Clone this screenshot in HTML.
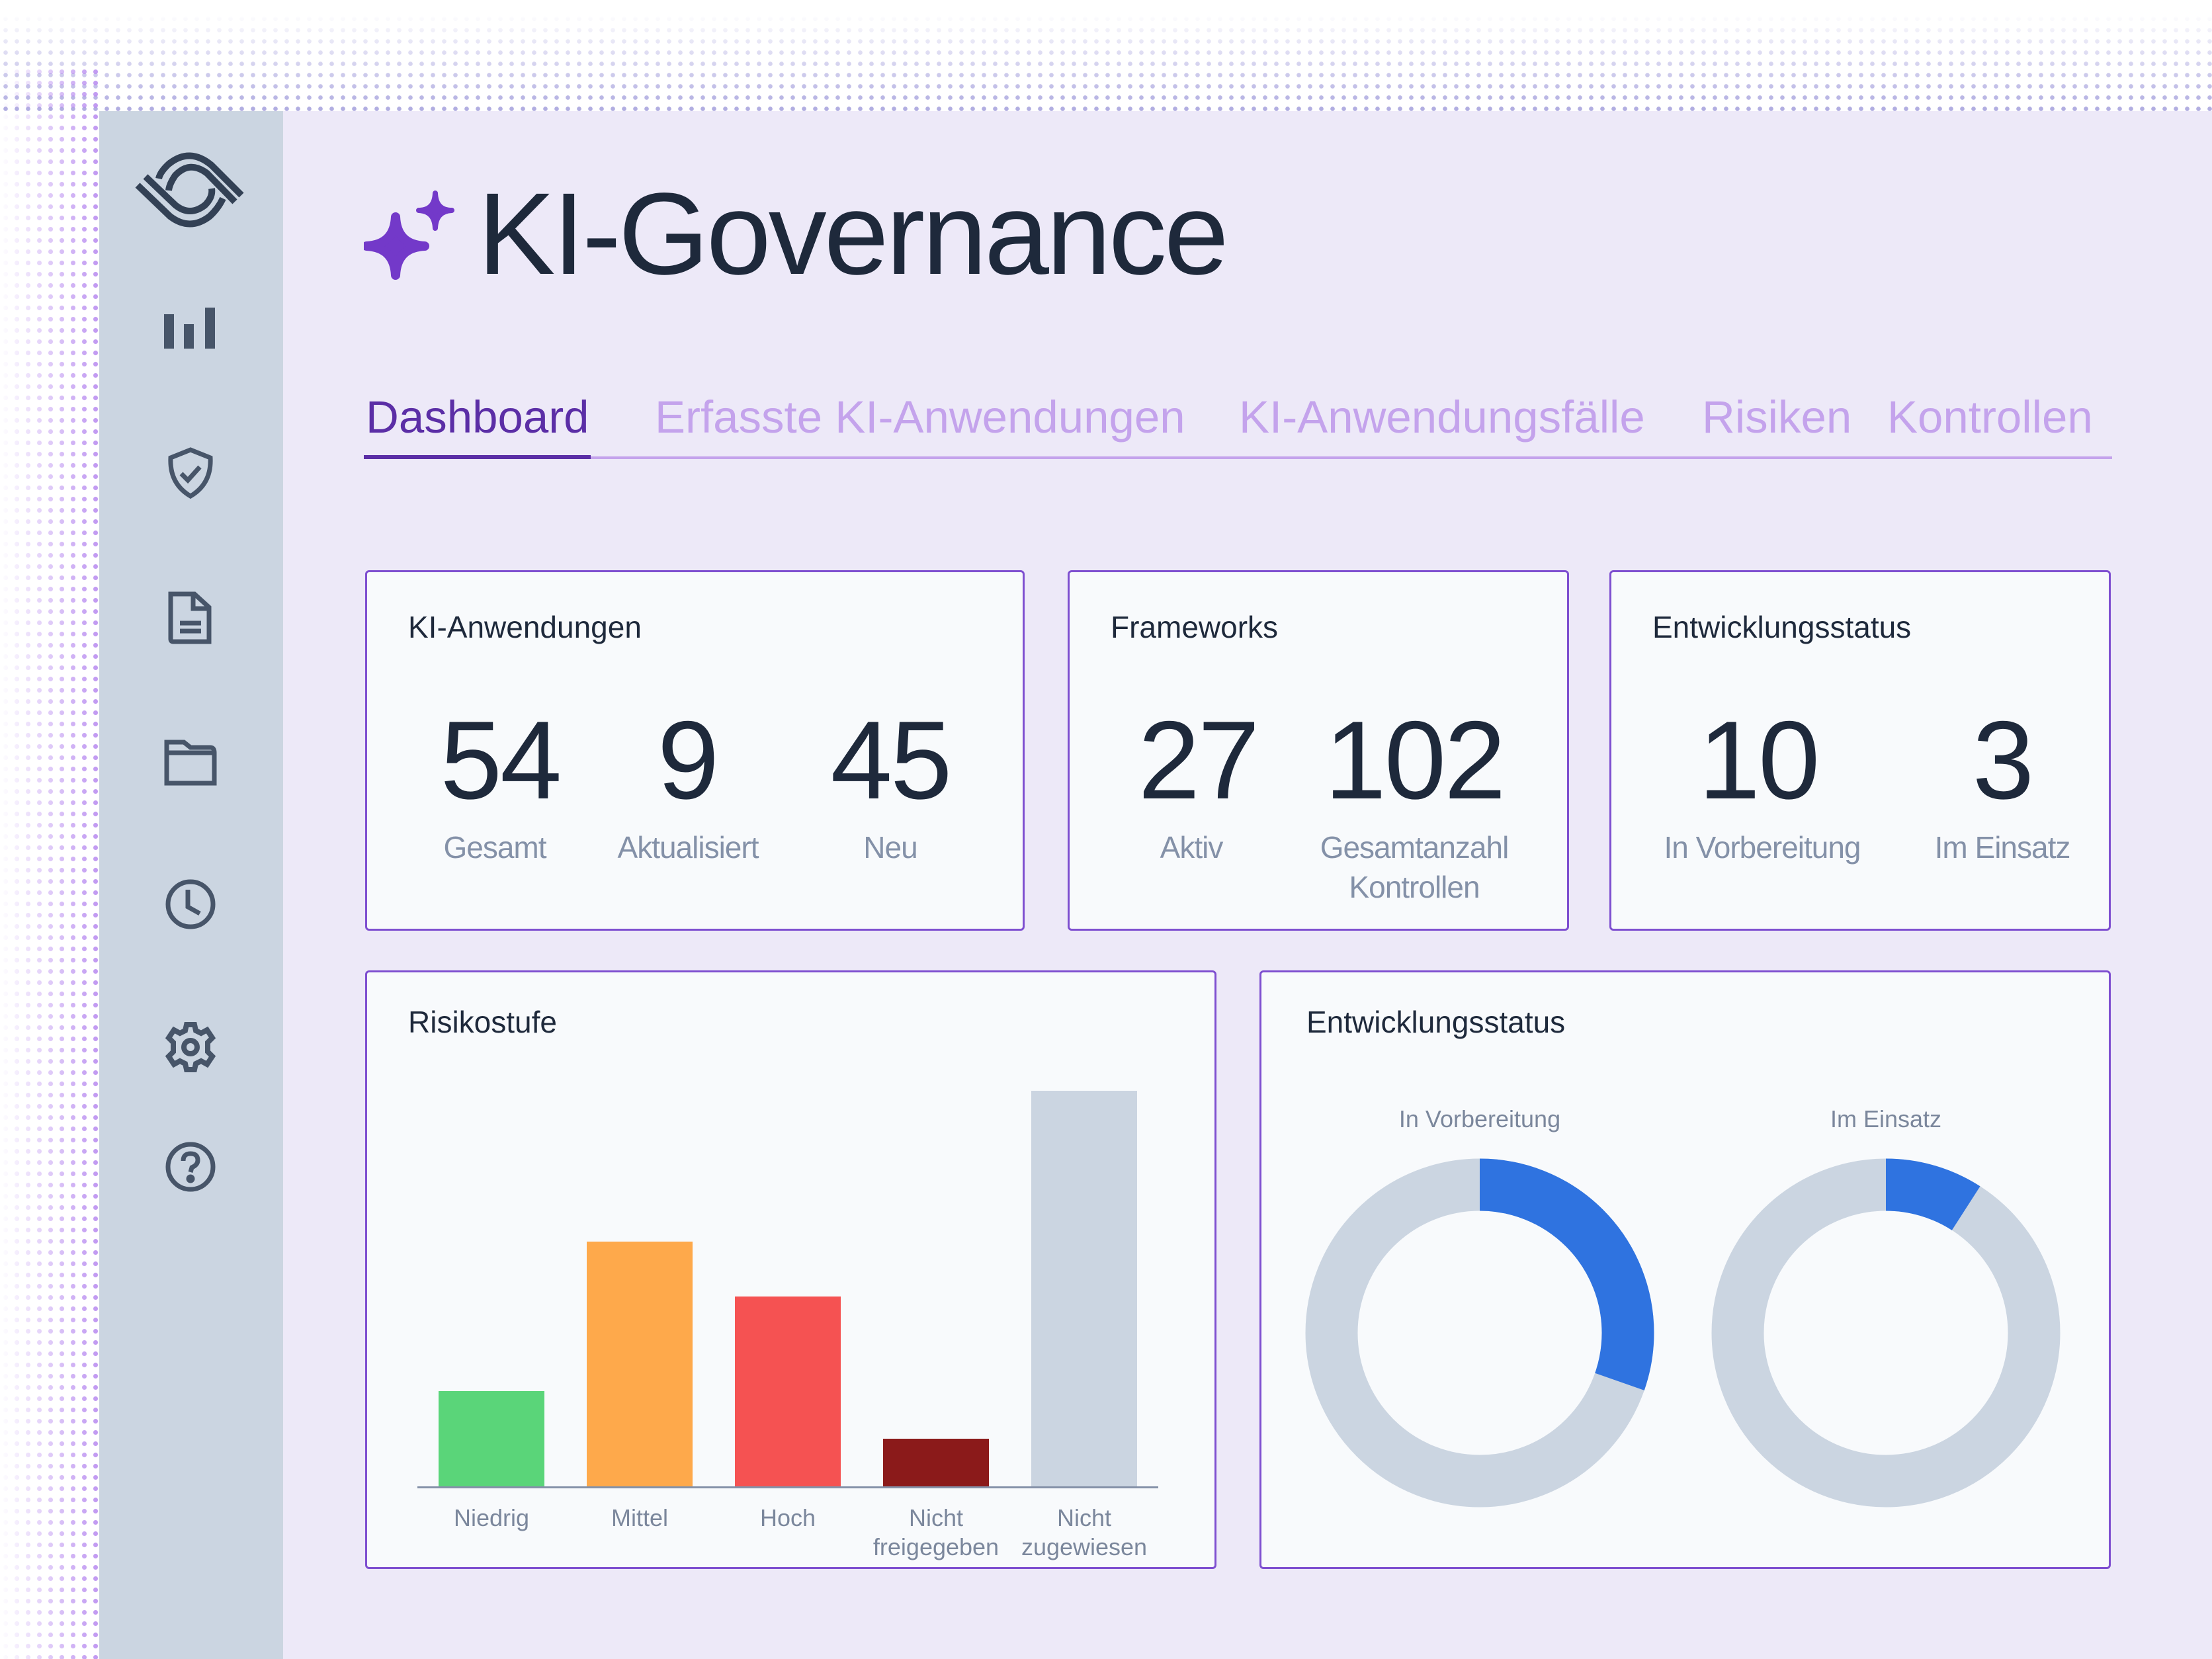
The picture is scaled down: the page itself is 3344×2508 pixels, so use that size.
<!DOCTYPE html>
<html><head><meta charset="utf-8"><style>
*{margin:0;padding:0;box-sizing:border-box}
body{width:3344px;height:2508px;position:relative;overflow:hidden;background:#fff;font-family:"Liberation Sans",sans-serif;}
.dotsTop{position:absolute;left:0;top:20px;width:3344px;height:150px;
background-image:radial-gradient(circle,#9a95d8 3px,transparent 3.6px);background-size:17px 17px;
-webkit-mask-image:linear-gradient(to bottom,transparent,rgba(0,0,0,.8));mask-image:linear-gradient(to bottom,transparent,rgba(0,0,0,.8))}
.dotsLeft{position:absolute;left:0;top:100px;width:150px;height:2408px;
background-image:radial-gradient(circle,#b98cf0 3.2px,transparent 3.8px);background-size:17px 17px;
-webkit-mask-image:linear-gradient(to right,transparent 0,rgba(0,0,0,.9) 100%);mask-image:linear-gradient(to right,transparent 0,rgba(0,0,0,.9) 100%)}
.side{position:absolute;left:150px;top:168px;width:278px;height:2340px;background:#cbd5e1}
.main{position:absolute;left:428px;top:168px;width:2916px;height:2340px;background:#ede9f8}
.ic{position:absolute;left:248px;width:80px;height:80px}
.title{position:absolute;left:722px;top:266px;font-size:176px;color:#1e293b;letter-spacing:-4px;line-height:1}
.tab{position:absolute;top:596px;font-size:69px;color:#c4a3ec;line-height:1}
.card{position:absolute;background:#f8fafc;border:3px solid #7e4fd0;border-radius:6px}
.ct{position:absolute;left:62px;top:56px;font-size:46px;color:#1e293b}
.num{position:absolute;top:200px;font-size:168px;color:#1e293b;transform:translateX(-50%);line-height:1;white-space:nowrap;letter-spacing:-3px}
.lab{position:absolute;top:386px;font-size:46px;color:#8491a8;transform:translateX(-50%);text-align:center;line-height:60px;white-space:nowrap;letter-spacing:-1px}
.bl{position:absolute;font-size:36px;color:#7b879c;text-align:center;transform:translateX(-50%);line-height:44px;white-space:nowrap}
</style></head><body>
<div class="dotsTop"></div>
<div class="dotsLeft"></div>
<div class="side"></div>
<div class="main"></div>

<!-- logo -->
<svg style="position:absolute;left:180px;top:200px" width="220" height="170" viewBox="0 0 220 170" fill="none" stroke="#334155" stroke-width="10">
<path d="M28 80 L77 127 Q107 150 137 127 Q150 115 157 100"/>
<path d="M40 67 L85 110 Q107 128 130 110 Q142 98 140 85"/>
<path d="M185 95 L140 50 Q107 22 75 48 Q62 60 60 70"/>
<path d="M175 105 L133 62 Q107 42 85 65 Q76 78 75 88"/>
</svg>
<!-- bars -->
<svg class="ic" style="top:465px" viewBox="0 0 80 80" fill="#475569"><rect x="0" y="10" width="15" height="52"/><rect x="30" y="25" width="15" height="37"/><rect x="62" y="0" width="15" height="62"/></svg>
<!-- shield -->
<svg class="ic" style="top:676px" viewBox="0 0 80 80" fill="none" stroke="#475569" stroke-width="7"><path d="M40 4 L70 16 Q72 55 40 74 Q8 55 10 16 Z"/><path d="M26 40 L36 50 L54 30"/></svg>
<!-- doc -->
<svg class="ic" style="top:894px" viewBox="0 0 80 80" fill="none" stroke="#475569" stroke-width="7"><path d="M10 4 H46 L68 24 V76 H14 Q10 76 10 72 Z"/><path d="M44 4 V26 H68"/><path d="M24 48 H56 M24 60 H56"/></svg>
<!-- folder -->
<svg class="ic" style="top:1114px" viewBox="0 0 80 80" fill="none" stroke="#475569" stroke-width="7"><path d="M4 8 H30 L40 16 H70 Q76 16 76 24 V70 H4 Z"/><path d="M4 24 H76"/></svg>
<!-- clock -->
<svg class="ic" style="top:1327px" viewBox="0 0 80 80" fill="none" stroke="#475569" stroke-width="7"><circle cx="40" cy="40" r="34"/><path d="M36 18 V44 L54 54"/></svg>
<!-- gear -->
<svg class="ic" style="top:1543px" viewBox="0 0 80 80" fill="none" stroke="#475569" stroke-width="8"><circle cx="40" cy="40" r="10"/><path d="M34 6 H46 L48 15 L56 19 L65 14 L73 26 L66 33 L66 47 L73 54 L65 66 L56 61 L48 65 L46 74 H34 L32 65 L24 61 L15 66 L7 54 L14 47 L14 33 L7 26 L15 14 L24 19 L32 15 Z"/></svg>
<!-- help -->
<svg class="ic" style="top:1724px" viewBox="0 0 80 80" fill="none" stroke="#475569" stroke-width="7"><circle cx="40" cy="40" r="34"/><path d="M29 31 Q29 20 40 20 Q51 20 51 30 Q51 37 42 41 L40 48" /><circle cx="40" cy="58" r="3" fill="#475569"/></svg>

<!-- sparkle -->
<svg style="position:absolute;left:550px;top:288px;width:140px;height:140px" viewBox="0 0 140 140" fill="#7339c9">
<path d="M48 40 Q50 82 92 84 Q50 86 48 128 Q46 86 4 84 Q46 82 48 40 Z" stroke="#7339c9" stroke-width="14" stroke-linejoin="round"/>
<path d="M108 4 Q109 30 133 30 Q109 31 108 57 Q107 31 83 30 Q107 30 108 4 Z" stroke="#7339c9" stroke-width="8" stroke-linejoin="round"/>
</svg>
<div class="title">KI-Governance</div>

<div class="tab" style="left:553px;color:#5b2ea6">Dashboard</div>
<div class="tab" style="left:990px">Erfasste KI-Anwendungen</div>
<div class="tab" style="left:1873px">KI-Anwendungsfälle</div>
<div class="tab" style="left:2573px">Risiken</div>
<div class="tab" style="left:2853px">Kontrollen</div>
<div style="position:absolute;left:550px;top:690px;width:2643px;height:4px;background:#c4a3ec"></div>
<div style="position:absolute;left:550px;top:688px;width:343px;height:6px;background:#5b2ea6"></div>

<div class="card" style="left:552px;top:862px;width:997px;height:545px">
<div class="ct">KI-Anwendungen</div>
<div class="num" style="left:201px">54</div><div class="lab" style="left:193px">Gesamt</div>
<div class="num" style="left:484px">9</div><div class="lab" style="left:485px">Aktualisiert</div>
<div class="num" style="left:791px">45</div><div class="lab" style="left:791px">Neu</div>
</div>
<div class="card" style="left:1614px;top:862px;width:758px;height:545px">
<div class="ct">Frameworks</div>
<div class="num" style="left:194px">27</div><div class="lab" style="left:184px">Aktiv</div>
<div class="num" style="left:521px">102</div><div class="lab" style="left:521px">Gesamtanzahl<br>Kontrollen</div>
</div>
<div class="card" style="left:2433px;top:862px;width:758px;height:545px">
<div class="ct">Entwicklungsstatus</div>
<div class="num" style="left:222px">10</div><div class="lab" style="left:228px">In Vorbereitung</div>
<div class="num" style="left:591px">3</div><div class="lab" style="left:591px">Im Einsatz</div>
</div>

<div class="card" style="left:552px;top:1467px;width:1287px;height:905px">
<div class="ct" style="top:48px">Risikostufe</div>
</div>
<div style="position:absolute;left:663px;top:2103px;width:160px;height:145px;background:#5ad579"></div>
<div style="position:absolute;left:887px;top:1877px;width:160px;height:371px;background:#fea94b"></div>
<div style="position:absolute;left:1111px;top:1960px;width:160px;height:288px;background:#f55252"></div>
<div style="position:absolute;left:1335px;top:2175px;width:160px;height:73px;background:#8b1a1a"></div>
<div style="position:absolute;left:1559px;top:1649px;width:160px;height:599px;background:#cbd5e1"></div>
<div style="position:absolute;left:631px;top:2247px;width:1120px;height:3px;background:#8491a8"></div>
<div class="bl" style="left:743px;top:2273px">Niedrig</div>
<div class="bl" style="left:967px;top:2273px">Mittel</div>
<div class="bl" style="left:1191px;top:2273px">Hoch</div>
<div class="bl" style="left:1415px;top:2273px">Nicht<br>freigegeben</div>
<div class="bl" style="left:1639px;top:2273px">Nicht<br>zugewiesen</div>

<div class="card" style="left:1904px;top:1467px;width:1287px;height:905px">
<div class="ct" style="left:68px;top:48px">Entwicklungsstatus</div>
</div>
<div class="bl" style="left:2237px;top:1670px">In Vorbereitung</div>
<div class="bl" style="left:2851px;top:1670px">Im Einsatz</div>
<svg style="position:absolute;left:0;top:0" width="3344" height="2508">
<circle cx="2237" cy="2015" r="224" fill="none" stroke="#cbd5e1" stroke-width="79"/>
<circle cx="2237" cy="2015" r="224" fill="none" stroke="#2f73e0" stroke-width="79" stroke-dasharray="427 2000" transform="rotate(-90 2237 2015)"/>
<circle cx="2851" cy="2015" r="224" fill="none" stroke="#cbd5e1" stroke-width="79"/>
<circle cx="2851" cy="2015" r="224" fill="none" stroke="#2f73e0" stroke-width="79" stroke-dasharray="128 2000" transform="rotate(-90 2851 2015)"/>
</svg>
</body></html>
